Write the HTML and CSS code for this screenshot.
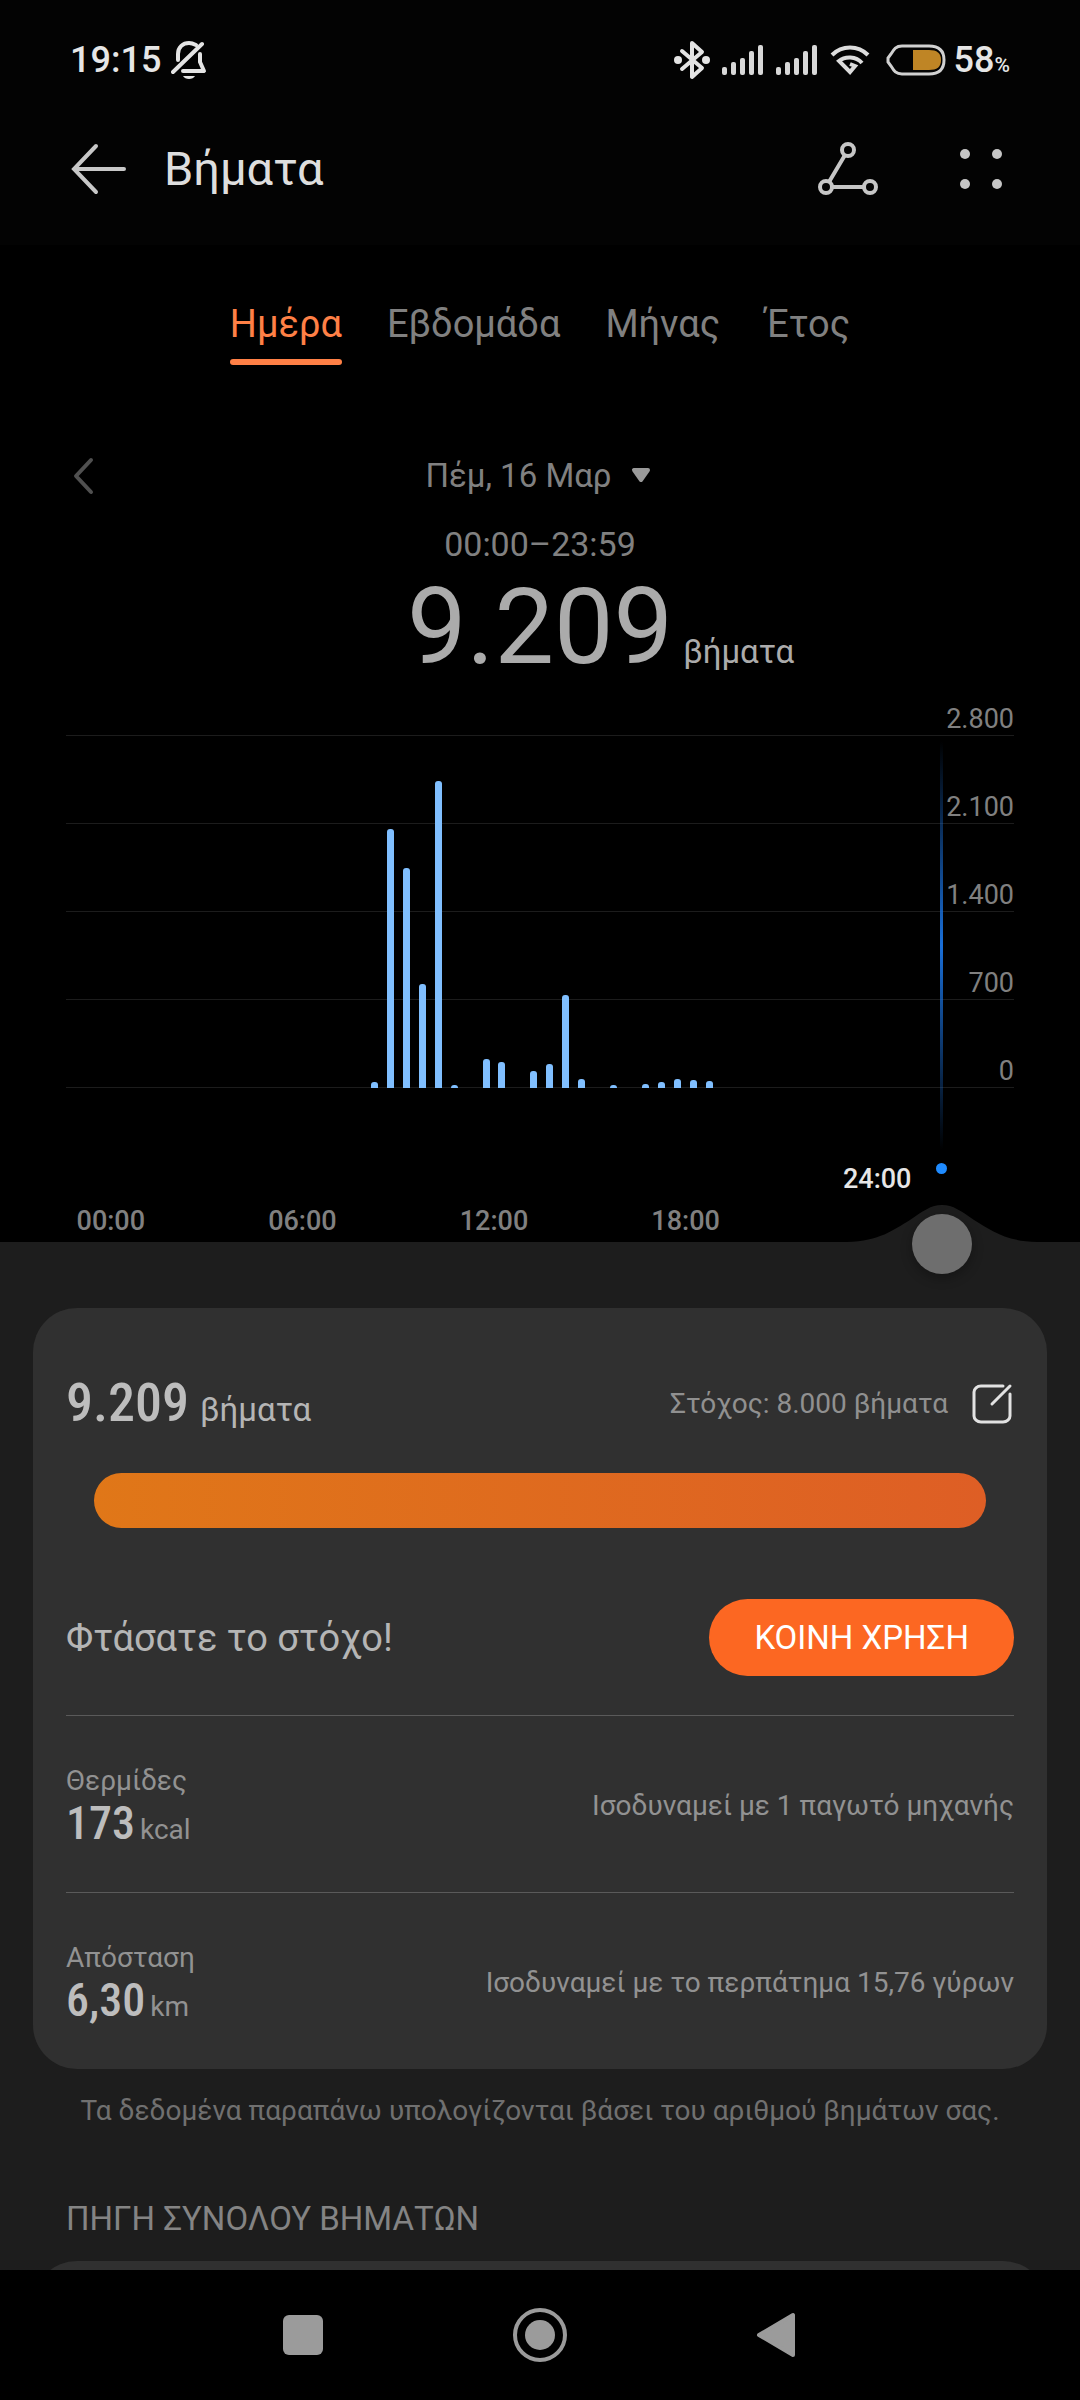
FILE: index.html
```html
<!DOCTYPE html>
<html lang="el">
<head>
<meta charset="utf-8">
<meta name="viewport" content="width=device-width, initial-scale=1">
<title>Βήματα</title>
<link rel="stylesheet" href="styles.css">
</head>
<body>
<div class="top">
  <div class="status">
    <div class="status-side">
      <span class="clock">19:15</span>
      <svg class="bell" width="36" height="40" viewBox="0 0 36 40" fill="none" stroke="#e4e4e4" stroke-width="4" stroke-linecap="round" stroke-linejoin="round"><path d="M7 20V14C7 7 12 3 18 3C21 3 23 4 25 5M29 14V22L33 31H12"/><path d="M2 32L31 4"/><path d="M12 36H24C22 40 14 40 12 36Z" fill="#e4e4e4" stroke="none"/></svg>
    </div>
    <div class="status-side status-icons">
      <svg width="36" height="40" viewBox="0 0 36 40" fill="none" stroke="#e4e4e4" stroke-width="4" stroke-linecap="round" stroke-linejoin="round"><path d="M8 11L28 28L18 37V3L28 12L8 29"/><circle cx="4" cy="20" r="4" fill="#e4e4e4" stroke="none"/><circle cx="32" cy="20" r="4" fill="#e4e4e4" stroke="none"/></svg>
      <svg width="42" height="32" viewBox="0 0 42 32" fill="#d8d8d8"><rect y="23" width="5" height="8" rx="2"/><rect x="9" y="18" width="5" height="13" rx="2"/><rect x="18" y="14" width="5" height="17" rx="2"/><rect x="27" y="7" width="5" height="24" rx="2"/><rect x="36" y="1" width="5" height="30" rx="2"/></svg>
      <svg width="42" height="32" viewBox="0 0 42 32" fill="#d8d8d8"><rect y="23" width="5" height="8" rx="2"/><rect x="9" y="18" width="5" height="13" rx="2"/><rect x="18" y="14" width="5" height="17" rx="2"/><rect x="27" y="7" width="5" height="24" rx="2"/><rect x="36" y="1" width="5" height="30" rx="2"/></svg>
      <svg width="40" height="32" viewBox="0 0 40 32" fill="none" stroke="#dcdcdc" stroke-width="4"><path d="M2 11C12 1 28 1 38 11"/><path d="M32 19C26 12 15 12 9 17L20 28L25 22L20 20"/></svg>
      <svg class="battery" width="60" height="32" viewBox="0 0 60 32"><path d="M16 2H43C53 2 58 7 58 16S53 30 43 30H16C10 30 8 27 5 22L2 18V14L5 10C8 5 10 2 16 2Z" fill="none" stroke="#d0d0d0" stroke-width="3"/><path d="M27 6H43C51 6 55 9 55 16S51 26 43 26H27Z" fill="#bf8525"/></svg>
      <span class="level">58<small>%</small></span>
    </div>
  </div>
  <header class="bar">
    <button class="icon-btn" aria-label="Πίσω"><svg width="56" height="54" viewBox="0 0 56 54" fill="none" stroke="#c8c8c8" stroke-width="4" stroke-linecap="round"><path d="M25 4L3 27L25 50M3 27H53"/></svg></button>
    <h1>Βήματα</h1>
    <button class="icon-btn" aria-label="Διαδρομή"><svg width="62" height="56" viewBox="0 0 62 56" fill="none" stroke="#c6c6c6" stroke-width="4"><circle cx="31" cy="9" r="6"/><circle cx="9" cy="46" r="6"/><circle cx="53" cy="46" r="6"/><path d="M28 14L12 41M15 46H47"/></svg></button>
    <button class="icon-btn more" aria-label="Περισσότερα"><svg width="44" height="42" viewBox="0 0 44 42" fill="#c6c6c6"><circle cx="6" cy="6" r="5"/><circle cx="38" cy="6" r="5"/><circle cx="6" cy="36" r="5"/><circle cx="38" cy="36" r="5"/></svg></button>
  </header>
</div>

<main>
  <section class="day">
    <div class="tabs" role="tablist">
      <button class="tab active" role="tab" aria-selected="true">Ημέρα</button>
      <button class="tab" role="tab">Εβδομάδα</button>
      <button class="tab" role="tab">Μήνας</button>
      <button class="tab" role="tab">Έτος</button>
    </div>
    <div class="date-row">
      <button class="prev" aria-label="Προηγούμενη ημέρα"><svg width="24" height="40" viewBox="0 0 24 40" fill="none" stroke="#505050" stroke-width="4" stroke-linecap="round" stroke-linejoin="round"><path d="M19 4L4 20L19 36"/></svg></button>
      <button class="date">Πέμ, 16 Μαρ <svg width="20" height="18" viewBox="0 0 20 18" fill="#999" stroke="#999" stroke-width="4" stroke-linejoin="round"><path d="M3 3H17L10 13Z"/></svg></button>
    </div>
    <p class="range">00:00–23:59</p>
    <p class="total"><strong>9.209</strong><span>βήματα</span></p>

    <div class="chart">
      <div class="lines">
        <div class="line">2.800</div>
        <div class="line">2.100</div>
        <div class="line">1.400</div>
        <div class="line">700</div>
        <div class="line">0</div>
      </div>
      <div class="bars">
        <i style="grid-column:17;height:6px"></i>
        <i style="grid-column:18;height:259px"></i>
        <i style="grid-column:19;height:220px"></i>
        <i style="grid-column:20;height:104px"></i>
        <i style="grid-column:21;height:307px"></i>
        <i style="grid-column:22;height:3px"></i>
        <i style="grid-column:24;height:29px"></i>
        <i style="grid-column:25;height:26px"></i>
        <i style="grid-column:27;height:17px"></i>
        <i style="grid-column:28;height:24px"></i>
        <i style="grid-column:29;height:93px"></i>
        <i style="grid-column:30;height:9px"></i>
        <i style="grid-column:32;height:3px"></i>
        <i style="grid-column:34;height:4px"></i>
        <i style="grid-column:35;height:6px"></i>
        <i style="grid-column:36;height:9px"></i>
        <i style="grid-column:37;height:8px"></i>
        <i style="grid-column:38;height:7px"></i>
      </div>
      <div class="hours">
        <span>00:00</span><span>06:00</span><span>12:00</span><span>18:00</span><span class="current">24:00</span>
      </div>
      <div class="cursor"></div>
      <svg class="bump" width="190" height="38" viewBox="0 0 190 38" fill="#1d1d1d"><path d="M0 38C33 37 46 26 63 16C76 7 84 1 95 1S114 7 127 16C144 26 157 37 190 38Z"/></svg>
      <input class="scrub" type="range" min="0" max="48" value="48" aria-label="Ώρα">
    </div>
  </section>

  <section class="card">
    <div class="goal">
      <p class="steps"><strong>9.209</strong><span>βήματα</span></p>
      <div class="target">Στόχος: 8.000 βήματα
        <button class="icon-btn" aria-label="Επεξεργασία στόχου"><svg width="42" height="42" viewBox="0 0 42 42" fill="none" stroke="#e2e2e2" stroke-width="3" stroke-linecap="round"><path d="M31 3H9C5 3 2 6 2 9V33C2 36 5 39 9 39H31C35 39 38 36 38 33V11"/><path d="M20 21L38 3"/></svg></button>
      </div>
    </div>
    <div class="progress"></div>
    <div class="reached">
      <p>Φτάσατε το στόχο!</p>
      <button class="share">ΚΟΙΝΗ ΧΡΗΣΗ</button>
    </div>
    <div class="metric">
      <div class="amount"><p class="label">Θερμίδες</p><p class="value"><strong>173</strong><span>kcal</span></p></div>
      <p class="equal">Ισοδυναμεί με 1 παγωτό μηχανής</p>
    </div>
    <div class="metric">
      <div class="amount"><p class="label">Απόσταση</p><p class="value"><strong>6,30</strong><span>km</span></p></div>
      <p class="equal">Ισοδυναμεί με το περπάτημα 15,76 γύρων</p>
    </div>
  </section>
  <p class="note">Τα δεδομένα παραπάνω υπολογίζονται βάσει του αριθμού βημάτων σας.</p>
  <h2>ΠΗΓΗ ΣΥΝΟΛΟΥ ΒΗΜΑΤΩΝ</h2>
  <section class="card source"></section>
</main>

<nav class="system">
  <button aria-label="Πρόσφατα"><svg width="56" height="56" viewBox="0 0 56 56" fill="#9b9b9b"><rect x="8" y="8" width="40" height="40" rx="6"/></svg></button>
  <button aria-label="Αρχική"><svg width="56" height="56" viewBox="0 0 56 56" fill="#9b9b9b"><circle cx="28" cy="28" r="25" fill="none" stroke="#9b9b9b" stroke-width="4"/><circle cx="28" cy="28" r="15"/></svg></button>
  <button aria-label="Πίσω"><svg width="56" height="56" viewBox="0 0 56 56" fill="#9b9b9b" stroke="#9b9b9b" stroke-width="4" stroke-linejoin="round"><path d="M44 8V48L10 28Z"/></svg></button>
</nav>
</body>
</html>
```
FILE: styles.css
```css
* { box-sizing: border-box; }

body {
  display: flex;
  flex-direction: column;
  height: 100vh;
  margin: 0;
  background: #000;
  color: #b5b5b5;
  font: 400 28px/32px Roboto, "Noto Sans", sans-serif;
}

p, h1, h2 { margin: 0; font-weight: 400; }

button {
  padding: 0;
  border: 0;
  background: none;
  color: inherit;
  font: inherit;
}

svg { display: block; flex: none; }

/* Status bar and title bar */
.top { flex: none; background: #030303; }

.status {
  display: flex;
  justify-content: space-between;
  padding: 38px 70px 0 70px;
  color: #e6e6e6;
  font-size: 36px;
  line-height: 44px;
  font-weight: 500;
}

.status-side { display: flex; align-items: center; gap: 10px; }
.status-icons { gap: 12px; }
.battery { margin: 0 -4px 0 4px; }
.level small { font-size: 21px; line-height: 20px; }

.bar {
  display: flex;
  align-items: center;
  height: 163px;
  padding: 10px 77px 0 71px;
}

.bar h1 {
  flex: 1;
  margin-left: 37px;
  color: #dedede;
  font-size: 47px;
  line-height: 58px;
}

.bar .more { margin-left: 80px; }

/* Content */
main { flex: 1; min-height: 0; overflow: hidden; background: #1d1d1d; }

.day { background: #000; color: #808080; }

.tabs { display: flex; justify-content: center; gap: 45px; padding-top: 57px; }

.tab {
  padding-bottom: 13px;
  border-bottom: 6px solid transparent;
  font-size: 38px;
  line-height: 44px;
}

.tab.active { color: #ff8046; position: relative; }

.tab.active::after {
  content: "";
  position: absolute;
  inset: auto 0 -6px;
  height: 6px;
  border-radius: 3px;
  background: #ff8046;
}

.date-row {
  display: grid;
  grid-template-columns: 1fr auto 1fr;
  align-items: center;
  margin-top: 91px;
  padding: 0 76px 0 72px;
  font-size: 33px;
  line-height: 40px;
}

.date { display: flex; align-items: center; gap: 19px; }

.range { margin-top: 28px; font-size: 34px; line-height: 40px; text-align: center; }

.total {
  display: grid;
  grid-template-columns: 1fr auto 1fr;
  gap: 10px;
  align-items: baseline;
  margin-top: 9px;
  color: #ababab;
  font-size: 33px;
  line-height: 40px;
}

.total strong { grid-column: 2; font-size: 106px; line-height: 108px; font-weight: 400; }

/* Hourly chart */
.chart { position: relative; margin-top: 15px; font-size: 27px; }

.lines { padding: 0 66px; }

.line {
  display: flex;
  align-items: flex-end;
  justify-content: flex-end;
  height: 88px;
  border-bottom: 1px solid #1c1c1c;
}

.line:first-child { height: 40px; }

.bars {
  position: absolute;
  inset: 0 203px 154px 111px;
  display: grid;
  grid-template-columns: repeat(48, 1fr);
  grid-template-rows: 100%;
  align-items: end;
  justify-items: center;
}

.bars i { grid-row: 1; width: 7px; border-radius: 3px 3px 0 0; background: #80bfff; }

.hours {
  display: grid;
  grid-template-columns: repeat(5, 1fr);
  align-items: end;
  height: 154px;
  padding: 0 107px 5px 15px;
  font-weight: 500;
  text-align: center;
}

.hours .current { padding-bottom: 42px; color: #e6e6e6; }

.cursor {
  position: absolute;
  inset: 45px 137px 92px auto;
  width: 3px;
  background: linear-gradient(transparent, #1a6fd8, transparent);
}

.cursor::after {
  content: "";
  position: absolute;
  left: -4px;
  bottom: -24px;
  width: 11px;
  height: 11px;
  border-radius: 50%;
  background: #1f8bff;
}

.bump { position: absolute; right: 43px; bottom: 0; }

.scrub {
  appearance: none;
  position: absolute;
  inset: auto 108px -32px 66px;
  width: auto;
  height: 60px;
  margin: 0;
  background: none;
}

.scrub::-webkit-slider-thumb {
  appearance: none;
  width: 60px;
  height: 60px;
  border-radius: 50%;
  background: #6e6e6e;
  box-shadow: 0 4px 12px rgba(0, 0, 0, 0.3);
}

/* Summary card */
.card {
  margin: 66px 33px 0;
  padding: 0 33px;
  border-radius: 44px;
  background: #303030;
}

.goal {
  display: flex;
  align-items: center;
  justify-content: space-between;
  height: 130px;
  padding-top: 62px;
}

.steps, .value { display: flex; align-items: baseline; }
.steps { gap: 11px; padding-top: 4px; font-size: 33px; line-height: 60px; }

.steps strong, .value strong {
  color: #bdbdbd;
  font-family: "Roboto Condensed", Roboto, sans-serif;
  font-weight: 500;
}

.steps strong { font-size: 54px; }

.target { display: flex; align-items: center; gap: 24px; color: #909090; }

.progress {
  height: 55px;
  margin: 35px 28px 0;
  border-radius: 28px;
  background: linear-gradient(90deg, #e07718, #de5e25);
}

.reached {
  display: flex;
  align-items: center;
  justify-content: space-between;
  padding: 71px 0 39px;
  font-size: 38px;
  line-height: 44px;
}

.share {
  padding: 0 45px;
  border-radius: 39px;
  background: #fc6722;
  color: #fff;
  font-size: 33px;
  line-height: 77px;
}

.metric {
  display: flex;
  align-items: center;
  justify-content: space-between;
  height: 177px;
  padding-top: 4px;
  border-top: 1px solid #5a5a5a;
  color: #929292;
}

.amount { padding-top: 8px; }
.value { gap: 5px; line-height: 52px; }
.value strong { font-size: 46px; }

.note { margin-top: 26px; color: #707070; text-align: center; }

h2 { margin: 72px 66px 0; color: #848484; font-size: 33px; line-height: 40px; }

.source { height: 200px; margin-top: 22px; }

/* System navigation */
.system {
  display: flex;
  flex: none;
  align-items: center;
  justify-content: center;
  gap: 181px;
  height: 130px;
  background: #000;
}
```
